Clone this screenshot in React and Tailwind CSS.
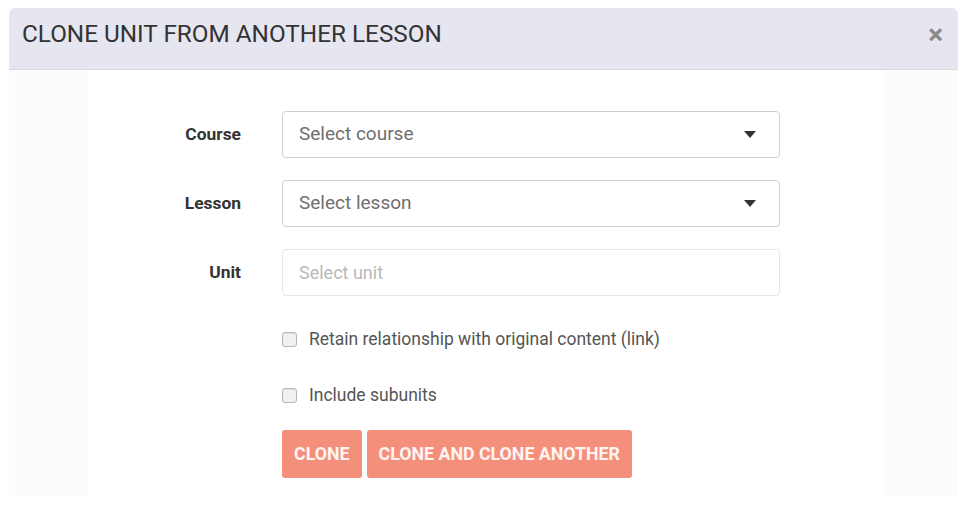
import { useState } from 'react';

function Caret() {
  return (
    <svg width="12" height="7" viewBox="0 0 12 7" className="shrink-0">
      <path d="M0 0h12L6 7z" fill="#333" />
    </svg>
  );
}

function SelectBox({ placeholder }) {
  return (
    <div className="w-[498px] h-[47px] flex items-center justify-between pl-4 pr-[23px] bg-white border border-[#cfcfcf] rounded-[4px]">
      <span className="text-[19px] text-[#6f6f6f]">{placeholder}</span>
      <Caret />
    </div>
  );
}

function Row({ label, children }) {
  return (
    <div className="flex items-center">
      <label className="w-[232px] pr-[41px] text-right text-[17.4px] font-bold text-[#333]">{label}</label>
      {children}
    </div>
  );
}

function Check({ label }) {
  const [checked, setChecked] = useState(false);
  return (
    <label className="h-[24px] flex items-center gap-3 ml-[232px] text-[17.5px] text-[#555]">
      <input
        type="checkbox"
        checked={checked}
        onChange={(e) => setChecked(e.target.checked)}
        className="appearance-none w-[15px] h-[15px] rounded-[3px] border border-[#b5b5b5] bg-[#f1f1f1] shadow-[inset_0_1px_1px_rgba(0,0,0,0.08)]"
      />
      <span>{label}</span>
    </label>
  );
}

export default function App() {
  return (
    <div className="w-[964px] h-[509px] bg-white pt-2 pl-[9px]" style={{ fontFamily: 'Roboto, "Liberation Sans", sans-serif' }}>
      <div className="w-[949px]">
        {/* Header */}
        <div className="h-[62px] flex items-start justify-between pt-[10px] pl-[13px] pr-[15px] bg-[#e6e6f0] border-b border-[#d9d9e0] rounded-t-[6px]">
          <h2 className="text-[24.3px] leading-[32px] text-[#333]">CLONE UNIT FROM ANOTHER LESSON</h2>
          <button className="text-[#8a8a8a] text-[28px] font-bold leading-[32px] mt-[1px]">×</button>
        </div>

        {/* Body */}
        <div className="bg-[#fcfcfc] h-[426px] flex">
          <div className="ml-[79px] w-[797px] bg-white pt-[41px]">
            <div className="flex flex-col gap-[22px] -ml-[38px]">
              <Row label="Course">
                <SelectBox placeholder="Select course" />
              </Row>
              <Row label="Lesson">
                <SelectBox placeholder="Select lesson" />
              </Row>
              <Row label="Unit">
                <div className="w-[498px] h-[47px] flex items-center pl-4 bg-white border border-[#e6e6e6] rounded-[4px]">
                  <span className="text-[18px] text-[#b9b9b9]">Select unit</span>
                </div>
              </Row>
            </div>
            <div className="-ml-[38px] mt-[31px] flex flex-col gap-[32px]">
              <Check label="Retain relationship with original content (link)" />
              <Check label="Include subunits" />
            </div>
            <div className="-ml-[38px] pl-[232px] mt-[23px] flex gap-[5px]">
              <button className="h-[48px] px-3 rounded-[3px] bg-[#f48f7c] text-white/90 text-[17.8px] font-bold">CLONE</button>
              <button className="h-[48px] px-3 rounded-[3px] bg-[#f48f7c] text-white/90 text-[17.8px] font-bold">CLONE AND CLONE ANOTHER</button>
            </div>
          </div>
        </div>
      </div>
    </div>
  );
}
